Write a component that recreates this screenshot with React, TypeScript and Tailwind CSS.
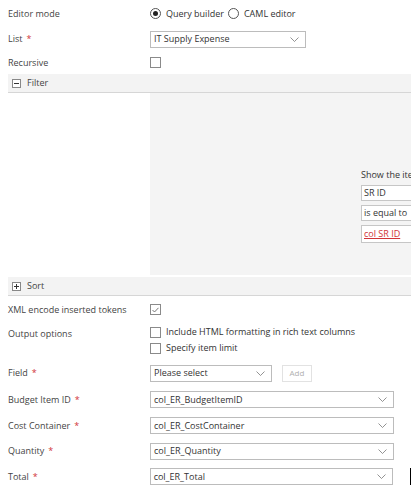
import React from 'react';

const FONT = { fontFamily: '"Open Sans", "Noto Sans", sans-serif' };

const Req = () => <span className="ml-1 text-[#d13438]">*</span>;

const Chevron = () => (
  <svg width="9" height="5" viewBox="0 0 9 5" className="shrink-0" aria-hidden="true">
    <path d="M0.5 0.5 L4.5 4.5 L8.5 0.5" stroke="#777" strokeWidth="0.8" fill="none" />
  </svg>
);

const Select = ({ value, width }: { value: string; width: string }) => (
  <div className={`${width} h-[17px] flex items-center justify-between border border-[#bcbcbc] bg-white pl-[3px] pr-[6px] text-[9px] text-[#333]`}>
    <span>{value}</span>
    <Chevron />
  </div>
);

const Checkbox = ({ checked = false }: { checked?: boolean }) => (
  <div className="w-[11px] h-[11px] border border-[#8a8a8a] bg-white flex items-center justify-center shrink-0">
    {checked && (
      <svg width="7" height="6" viewBox="0 0 7 6" aria-hidden="true">
        <path d="M0.5 3 L2.5 5 L6.5 0.8" stroke="#666" strokeWidth="0.9" fill="none" />
      </svg>
    )}
  </div>
);

const Radio = ({ checked = false }: { checked?: boolean }) => (
  <div className="w-[11px] h-[11px] rounded-full border border-[#555] flex items-center justify-center shrink-0">
    {checked && <div className="w-[5px] h-[5px] rounded-full bg-[#222]" />}
  </div>
);

const Row = ({ label, required, h, children }: { label: string; required?: boolean; h: string; children: React.ReactNode }) => (
  <div className={`flex items-center ${h}`}>
    <div className="w-[142px] text-[9px] text-[#444]">
      {label}
      {required && <Req />}
    </div>
    {children}
  </div>
);

const Section = ({ title, open }: { title: string; open: boolean }) => (
  <div className="flex items-center h-[19px] bg-[#f3f3f3] border-b border-[#d6d6d6] pl-[4px] text-[9px] text-[#444]">
    <div className="w-[9px] h-[9px] border border-[#888] bg-white flex items-center justify-center mr-[6px]">
      <div className="relative w-[5px] h-[5px] flex items-center justify-center">
        <div className="absolute w-[5px] h-px bg-[#333]" />
        {!open && <div className="absolute h-[5px] w-px bg-[#333]" />}
      </div>
    </div>
    {title}
  </div>
);

export default function App() {
  return (
    <div className="w-[420px] h-[493px] bg-white overflow-hidden relative" style={FONT}>
      <div className="w-[403px] ml-[8px]">
        <Row label="Editor mode" h="h-[27px]">
          <div className="flex items-center text-[9px] text-[#333]">
            <Radio checked />
            <span className="ml-[5px] mr-[4px]">Query builder</span>
            <Radio />
            <span className="ml-[5px]">CAML editor</span>
          </div>
        </Row>
        <Row label="List" required h="h-[24px]">
          <Select value="IT Supply Expense" width="w-[156px]" />
        </Row>
        <Row label="Recursive" h="h-[23px]">
          <Checkbox />
        </Row>

        <Section title="Filter" open />
        <div className="flex h-[182px]">
          <div className="w-[142px]" />
          {/* condition builder, scrolled so only its left edge is in view */}
          <div className="flex-1 bg-[#f4f4f4] flex flex-col pl-[211px] pt-[75px] text-[9px] text-[#333] overflow-hidden">
            <div className="whitespace-nowrap h-[14px] overflow-hidden">Show the items</div>
            <div className="mt-[3px] w-[60px] h-[16px] border border-[#c6c6c6] bg-white pl-[2px] flex items-center whitespace-nowrap">SR ID</div>
            <div className="mt-[4px] w-[60px] h-[16px] border border-[#c6c6c6] bg-white pl-[2px] flex items-center whitespace-nowrap">is equal to</div>
            <div className="mt-[4px] w-[60px] h-[18px] border border-[#c6c6c6] bg-white pl-[2px] flex items-center whitespace-nowrap">
              <span className="text-[#d13438] underline">col SR ID</span>
            </div>
          </div>
        </div>

        <div className="h-[2px]" />
        <Section title="Sort" open={false} />

        <Row label="XML encode inserted tokens" h="h-[27px]">
          <Checkbox checked />
        </Row>
        <div className="flex h-[37px] pt-[3px]">
          <div className="w-[142px] text-[9px] text-[#444] pt-[1px]">Output options</div>
          <div className="flex flex-col gap-[4px] text-[9px] text-[#333]">
            <div className="flex items-center h-[12px]">
              <Checkbox />
              <span className="ml-[5px]">Include HTML formatting in rich text columns</span>
            </div>
            <div className="flex items-center h-[12px]">
              <Checkbox />
              <span className="ml-[5px]">Specify item limit</span>
            </div>
          </div>
        </div>
        <Row label="Field" required h="h-[26px]">
          <Select value="Please select" width="w-[122px]" />
          <div className="ml-[10px] w-[30px] h-[17px] border border-[#e2e2e2] bg-white flex items-center justify-center text-[8px] text-[#b0b0b0]">Add</div>
        </Row>
        <Row label="Budget Item ID" required h="h-[27px]">
          <Select value="col_ER_BudgetItemID" width="w-[244px]" />
        </Row>
        <Row label="Cost Container" required h="h-[25px]">
          <Select value="col_ER_CostContainer" width="w-[244px]" />
        </Row>
        <Row label="Quantity" required h="h-[26px]">
          <Select value="col_ER_Quantity" width="w-[244px]" />
        </Row>
        <div className="flex items-center h-[25px]">
          <div className="w-[142px] text-[9px] text-[#444]">
            Total<Req />
          </div>
          <Select value="col_ER_Total" width="w-[244px]" />
          <div className="ml-[17px] w-px h-[17px] bg-black" />
        </div>
      </div>
    </div>
  );
}
